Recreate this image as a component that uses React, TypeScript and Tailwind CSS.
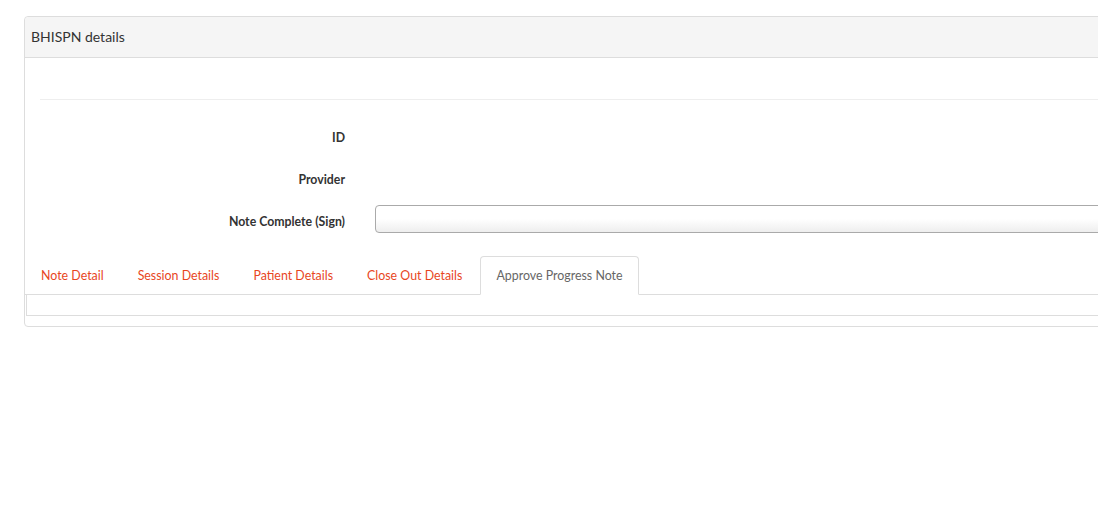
import React from "react";

const font = { fontFamily: "Lato, 'Open Sans', sans-serif" };

export default function App() {
  const tabs = ["Note Detail", "Session Details", "Patient Details", "Close Out Details"];
  return (
    <div className="w-[1098px] h-[526px] overflow-hidden bg-white text-[#333]" style={font}>
      <div className="ml-[24px] mt-[16px] w-[1120px] border border-[#dddddd] rounded-[4px] bg-white">
        <div className="h-[41px] bg-[#f5f5f5] border-b border-[#dddddd] rounded-t-[4px] pl-[6px] pb-[2px] flex items-center">
          <h3 className="text-[14px] text-[#333]">BHISPN details</h3>
        </div>
        <div className="px-[15px]">
          <div className="h-[42px] border-b border-[#eeeeee]"></div>
          <div className="pt-[21px]">
            {["ID", "Provider"].map((l) => (
              <div key={l} className="flex h-[28px] mb-[14px]">
                <label className="w-[305px] text-right text-[12.3px] font-bold leading-[20px] pt-[7px]">{l}</label>
              </div>
            ))}
            <div className="flex h-[28px]">
              <label className="w-[305px] text-right text-[12.3px] font-bold leading-[20px] pt-[7px]">Note Complete (Sign)</label>
              <div className="ml-[30px] flex-1 h-[28px] border border-[#aaaaaa] rounded-[4px] bg-gradient-to-b from-white from-50% to-[#eeeeee]"></div>
            </div>
          </div>
        </div>
        <div className="mt-[23px]">
          <ul className="flex border-b border-[#dddddd] h-[39px]">
            {tabs.map((t) => (
              <li key={t} className="mr-[2px]">
                <a className="block border border-transparent px-[15px] h-[38px] leading-[37px] text-[12.4px] text-[#e8461e]">{t}</a>
              </li>
            ))}
            <li className="mr-[2px]">
              <a className="block border border-[#dddddd] border-b-white rounded-t-[4px] bg-white px-[15px] h-[39px] leading-[37px] text-[12.4px] text-[#666666]">Approve Progress Note</a>
            </li>
          </ul>
          <div className="ml-[1px] h-[21px] border-l border-b border-[#dddddd]"></div>
        </div>
        <div className="h-[10px]"></div>
      </div>
    </div>
  );
}
